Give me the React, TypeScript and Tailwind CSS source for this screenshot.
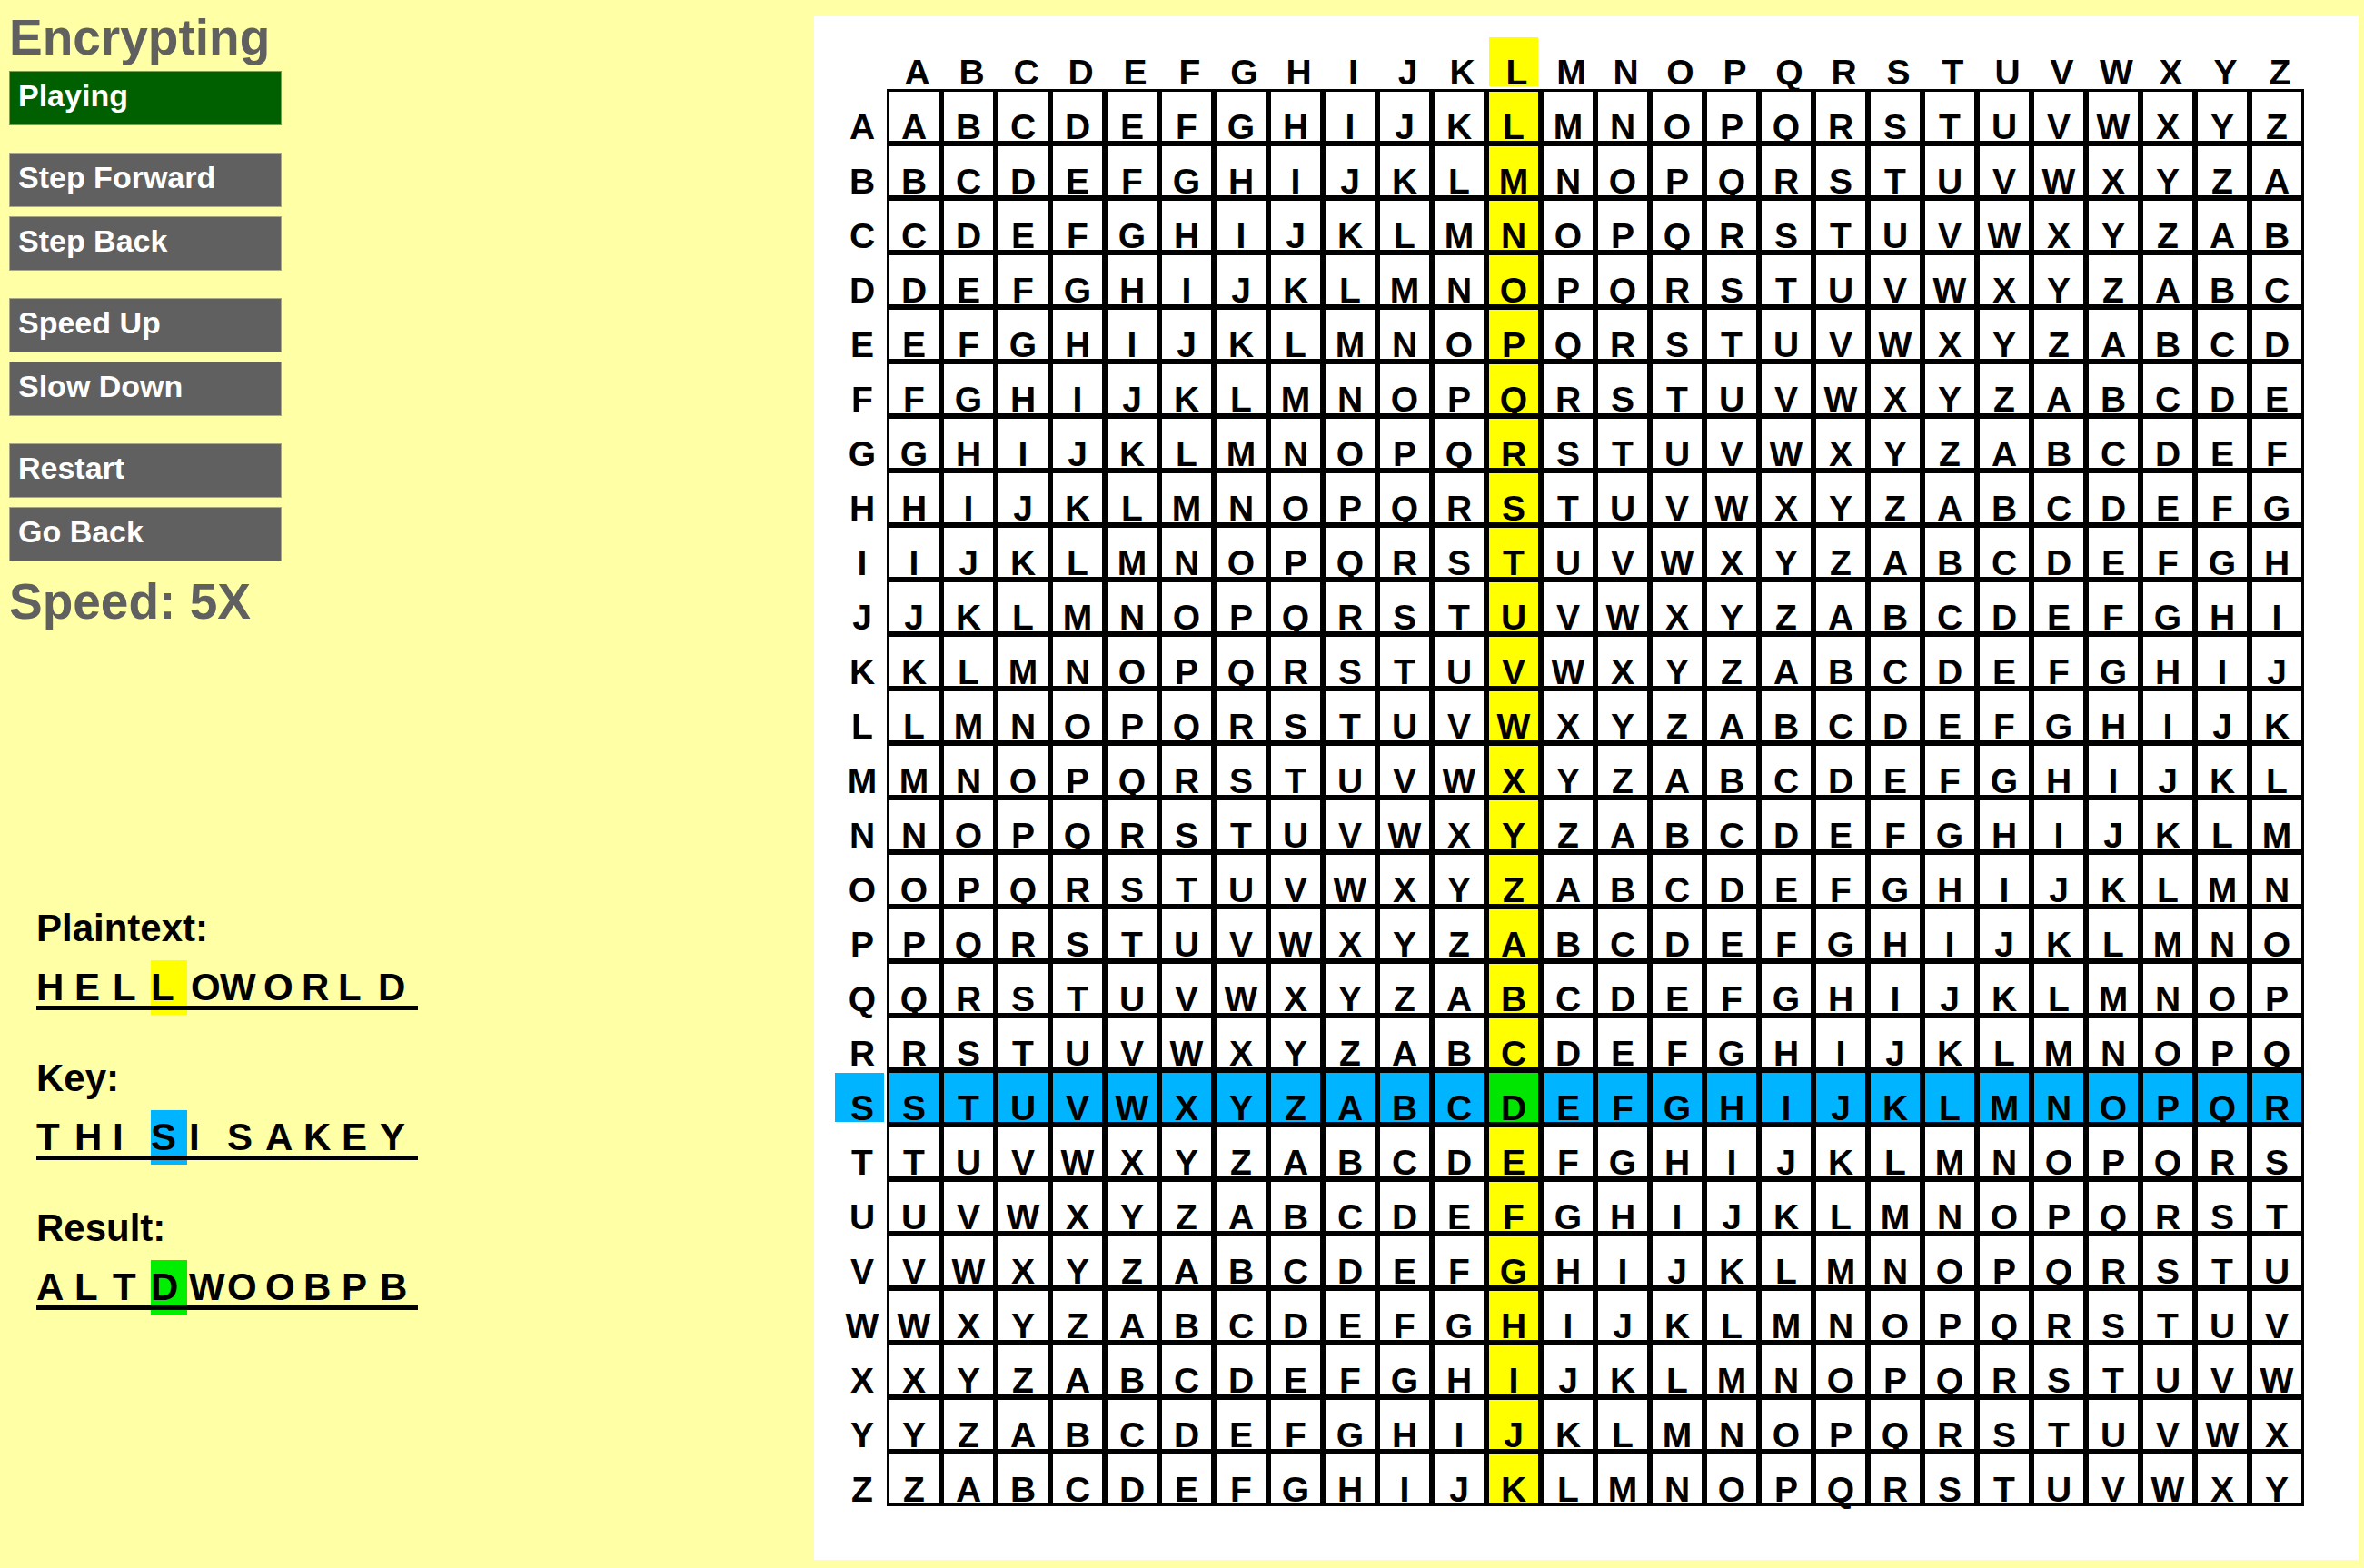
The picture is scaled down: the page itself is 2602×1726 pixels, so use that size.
import React, { Fragment } from "react";

const LETTERS = "ABCDEFGHIJKLMNOPQRSTUVWXYZ".split("");
const COL = 11;
const ROW = 18;

function Btn({ label, green }: { label: string; green?: boolean }) {
  return (
    <div
      className={`box-border h-[60px] w-[300px] border pl-[9px] pt-[9px] text-[34px] font-bold leading-none text-white ${
        green ? "border-[#7fa050] bg-[#006000]" : "border-[#a8a888] bg-[#606060]"
      }`}
    >
      {label}
    </div>
  );
}

function Cipher({
  text,
  widths,
  hi,
  hiClass,
}: {
  text: string;
  widths: number[];
  hi: number;
  hiClass: string;
}) {
  return (
    <div className="relative flex h-[60px] w-[420px]">
      {text.split("").map((ch, i) => (
        <div key={i} style={{ width: widths[i] }} className="h-[60px] shrink-0">
          <span
            className={`block h-[60px] w-[40px] pt-[9px] text-[42px] font-bold leading-none text-black ${
              i === hi ? hiClass : ""
            }`}
          >
            {ch}
          </span>
        </div>
      ))}
      <div className="absolute left-0 top-[50px] h-[5px] w-[420px] bg-black" />
    </div>
  );
}

const UNIFORM = [42, 42, 42, 42, 42, 42, 42, 42, 42, 42];
const PLAIN_W = [42, 42, 42, 44, 32, 48, 42, 40, 44, 42];

export default function App() {
  return (
    <div className="flex h-[1726px] w-[2602px] overflow-hidden bg-[#ffffa5] font-['Liberation_Sans',Arial,sans-serif]">
      <div className="flex w-[896px] shrink-0 flex-col pl-[10px] pt-[14px]">
        <div className="h-[55px] text-[55px] font-bold leading-none text-[#606060]">Encrypting</div>
        <div className="mt-[9px]">
          <Btn label="Playing" green />
        </div>
        <div className="mt-[30px] flex flex-col gap-[10px]">
          <Btn label="Step Forward" />
          <Btn label="Step Back" />
        </div>
        <div className="mt-[30px] flex flex-col gap-[10px]">
          <Btn label="Speed Up" />
          <Btn label="Slow Down" />
        </div>
        <div className="mt-[30px] flex flex-col gap-[10px]">
          <Btn label="Restart" />
          <Btn label="Go Back" />
        </div>
        <div className="mt-[17px] h-[55px] text-[55px] font-bold leading-none text-[#606060]">Speed: 5X</div>

        <div className="ml-[30px] mt-[311px] flex flex-col">
          <div className="h-[42px] text-[42px] font-bold leading-none text-black">Plaintext:</div>
          <div className="mt-[14px]">
            <Cipher text="HELLOWORLD" widths={PLAIN_W} hi={3} hiClass="bg-[#ffff00]" />
          </div>
          <div className="mt-[49px] h-[42px] text-[42px] font-bold leading-none text-black">Key:</div>
          <div className="mt-[14px]">
            <Cipher text="THISISAKEY" widths={UNIFORM} hi={3} hiClass="bg-[#00b4ff]" />
          </div>
          <div className="mt-[49px] h-[42px] text-[42px] font-bold leading-none text-black">Result:</div>
          <div className="mt-[14px]">
            <Cipher text="ALTDWOOBPB" widths={UNIFORM} hi={3} hiClass="bg-[#00ee00]" />
          </div>
        </div>
      </div>

      <div className="mt-[18px] box-border h-[1699px] w-[1700px] shrink-0 bg-white pl-[20px] pt-[20px]">
        <div className="grid grid-cols-[repeat(27,60px)] grid-rows-[repeat(27,60px)] text-[39px] font-bold text-black">
          <div />
          {LETTERS.map((l, c) => (
            <div
              key={"h" + l}
              className={`box-border flex items-end justify-center border-[3px] border-transparent bg-clip-padding pb-[2px] pl-[7px] ${
                c === COL ? "bg-[#ffff00]" : ""
              }`}
            >
              <span className="leading-[27px]">{l}</span>
            </div>
          ))}
          {LETTERS.map((rl, r) => (
            <Fragment key={"r" + rl}>
              <div
                className={`box-border flex items-end justify-center border-[3px] border-transparent bg-clip-padding pb-[2px] pl-[6px] ${
                  r === ROW ? "bg-[#00b4ff]" : ""
                }`}
              >
                <span className="leading-[27px]">{rl}</span>
              </div>
              {LETTERS.map((_, c) => {
                const ch = LETTERS[(r + c) % 26];
                const bg =
                  r === ROW && c === COL
                    ? "bg-[#00e600]"
                    : r === ROW
                    ? "bg-[#00b4ff]"
                    : c === COL
                    ? "bg-[#ffff00]"
                    : "bg-white";
                return (
                  <div
                    key={c}
                    className={`box-border flex items-end justify-center border-[3px] border-black pb-[2px] ${bg}`}
                  >
                    <span className="leading-[27px]">{ch}</span>
                  </div>
                );
              })}
            </Fragment>
          ))}
        </div>
      </div>
    </div>
  );
}
